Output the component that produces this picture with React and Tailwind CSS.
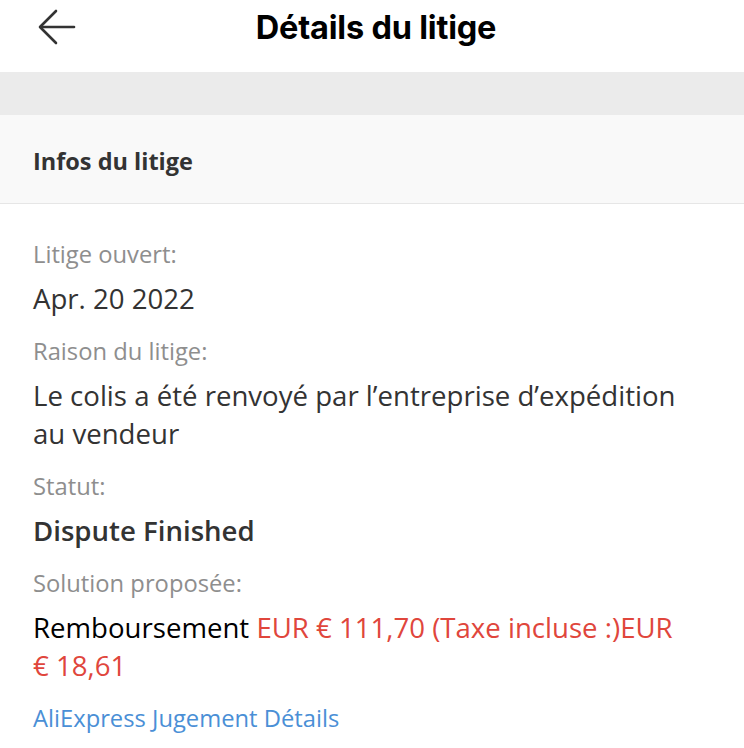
import React from 'react'

function Field({ label, children, className = '' }) {
  return (
    <div className="flex flex-col gap-[10px]">
      <p className="text-[23.75px] leading-[30px] text-[#8e8e8e]">{label}</p>
      <div className={`text-[27.6px] leading-[38px] ${className}`}>{children}</div>
    </div>
  )
}

export default function App() {
  return (
    <div className="w-[744px] min-h-[748px] bg-white font-['Open_Sans',sans-serif]">
      {/* top bar */}
      <div className="relative h-[72px] flex items-center justify-center pl-[8px] bg-white">
        <button className="absolute left-[38px] top-[9px] p-0">
          <svg width="38" height="38" viewBox="0 0 38 38" fill="none" stroke="#333" strokeWidth="2.6" strokeLinecap="round" strokeLinejoin="round">
            <path d="M36 18H3" />
            <path d="M18 2L2 18l16 16" />
          </svg>
        </button>
        <h1 className="font-['Inter',sans-serif] font-bold text-[32.5px] tracking-[-0.2px] text-black -mt-[16px]">Détails du litige</h1>
      </div>

      <div className="h-[43px] bg-[#ebebeb]" />

      <div className="h-[89px] bg-[#f9f9f9] border-b border-[#e6e6e6] px-[33px] pt-[5px] flex items-center">
        <h2 className="font-bold text-[23.5px] text-[#333]">Infos du litige</h2>
      </div>

      <div className="px-[33px] pt-[35px] pb-6 flex flex-col gap-[19px]">
        <Field label="Litige ouvert:" className="text-[#333]">Apr. 20 2022</Field>
        <Field label="Raison du litige:" className="text-[#333]">
          Le colis a été renvoyé par l’entreprise d’expédition au vendeur
        </Field>
        <Field label="Statut:" className="text-[#333] font-semibold">Dispute Finished</Field>
        <Field label="Solution proposée:" className="text-black">
          Remboursement <span className="text-[#e0463c]">EUR € 111,70 (Taxe incluse :)EUR €&nbsp;18,61</span>
        </Field>
        <a href="#" className="text-[23.75px] leading-[30px] text-[#4a8fd6]">AliExpress Jugement Détails</a>
      </div>
    </div>
  )
}
